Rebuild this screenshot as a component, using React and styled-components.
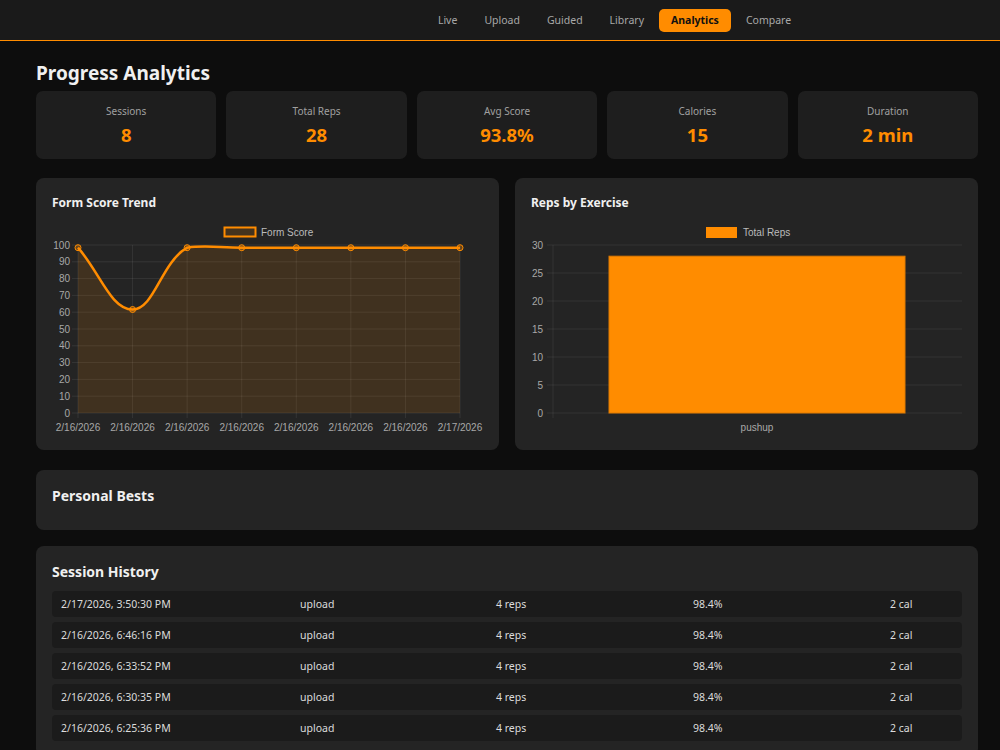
import React from 'react';
import styled, { createGlobalStyle } from 'styled-components';

const GlobalStyle = createGlobalStyle`
    html, body {
        margin: 0;
        padding: 0;
        background: #0d0d0d;
        color: #e8e8e8;
        font-family: "Noto Sans", "Open Sans", sans-serif;
    }
    * { box-sizing: border-box; }
`;

const ORANGE = '#ff8c00';
const CHART_FONT = '"Liberation Sans", Arial, sans-serif';

// Header
const Header = styled.header`
    height: 41px;
    background: #1a1a1a;
    border-bottom: 1px solid ${ORANGE};
    display: flex;
    align-items: center;
    justify-content: center;
    padding-left: 229px;
`;

const Nav = styled.nav`
    display: flex;
    gap: 3px;
`;

const NavItem = styled.button`
    border: none;
    border-radius: 5px;
    padding: 5px 12px;
    font-family: inherit;
    font-size: 10.5px;
    line-height: 13px;
    cursor: pointer;
    background: ${p => (p.$active ? ORANGE : 'transparent')};
    color: ${p => (p.$active ? '#111' : '#a8a8a8')};
    font-weight: ${p => (p.$active ? 700 : 400)};
`;

// Page
const Main = styled.main`
    width: 942px;
    margin-left: 36px;
    padding: 20px 0 40px;
`;

const Title = styled.h1`
    margin: 0 0 6px;
    font-size: 19px;
    line-height: 24px;
    font-weight: 700;
    color: #f0f0f0;
`;

const StatsRow = styled.div`
    display: grid;
    grid-template-columns: repeat(5, 1fr);
    gap: 10px;
    margin-bottom: 19px;
`;

const StatCard = styled.div`
    background: #1e1e1e;
    border-radius: 7px;
    height: 68px;
    display: flex;
    flex-direction: column;
    align-items: center;
    padding-top: 13px;
`;

const StatLabel = styled.div`
    font-size: 10px;
    line-height: 14px;
    color: #a0a0a0;
`;

const StatValue = styled.div`
    font-size: 18.5px;
    line-height: 24px;
    font-weight: 700;
    color: ${ORANGE};
    margin-top: 5px;
`;

const ChartsRow = styled.div`
    display: grid;
    grid-template-columns: 1fr 1fr;
    gap: 16px;
    margin-bottom: 20px;
`;

const Card = styled.section`
    background: #242424;
    border-radius: 8px;
    padding: 16px 16px ${p => p.$bottom || 16}px;
    margin-bottom: ${p => p.$gap || 0}px;
`;

const CardTitle = styled.h3`
    margin: 0;
    font-size: 12px;
    line-height: 18px;
    font-weight: 700;
    color: #f0f0f0;
`;

const SectionTitle = styled.h2`
    margin: 0 0 ${p => p.$mb || 8}px;
    font-size: 14px;
    line-height: 20px;
    font-weight: 700;
    color: #f0f0f0;
`;

const ChartSvg = styled.svg`
    display: block;
    margin-top: 11px;
    overflow: visible;
`;

const Rows = styled.div`
    display: flex;
    flex-direction: column;
    gap: 5px;
`;

const Row = styled.div`
    display: grid;
    grid-template-columns: 239px 196px 197px 197px 1fr;
    align-items: center;
    height: 26px;
    padding: 0 9px;
    background: #1b1b1b;
    border-radius: 4px;
    font-size: 10.5px;
    color: #dcdcdc;
`;

// Charts
const scores = [98.4, 61.6, 98.4, 98.4, 98.4, 98.4, 98.4, 98.4];
const dates = ['2/16/2026', '2/16/2026', '2/16/2026', '2/16/2026', '2/16/2026', '2/16/2026', '2/16/2026', '2/17/2026'];

const LX0 = 26, LX1 = 408, TOP = 22, BOT = 190;

// chart.js-like spline, control points kept inside the plot area
function splinePath(pts, t = 0.4) {
    const clampY = y => Math.min(BOT, Math.max(TOP, y));
    const cps = pts.map((p, i) => {
        const p0 = pts[i - 1] || p;
        const p2 = pts[i + 1] || p;
        const d01 = Math.hypot(p[0] - p0[0], p[1] - p0[1]);
        const d12 = Math.hypot(p2[0] - p[0], p2[1] - p[1]);
        const sum = d01 + d12 || 1;
        const fa = t * d01 / sum;
        const fb = t * d12 / sum;
        return {
            prev: [p[0] - fa * (p2[0] - p0[0]), clampY(p[1] - fa * (p2[1] - p0[1]))],
            next: [p[0] + fb * (p2[0] - p0[0]), clampY(p[1] + fb * (p2[1] - p0[1]))],
        };
    });
    let d = `M${pts[0][0]},${pts[0][1]}`;
    for (let i = 1; i < pts.length; i++) {
        const a = cps[i - 1].next;
        const b = cps[i].prev;
        d += ` C${a[0]},${a[1]} ${b[0]},${b[1]} ${pts[i][0]},${pts[i][1]}`;
    }
    return d;
}

const LineChart = () => {
    const step = (LX1 - LX0) / (scores.length - 1);
    const pts = scores.map((s, i) => [LX0 + i * step, BOT - (s / 100) * (BOT - TOP)]);
    const line = splinePath(pts);
    const area = `${line} L${LX1},${BOT} L${LX0},${BOT} Z`;
    const ticks = [0, 10, 20, 30, 40, 50, 60, 70, 80, 90, 100];
    return (
        <ChartSvg width="431" height="215" fontFamily={CHART_FONT} fontSize="10">
            <rect x="172.5" y="4.5" width="31" height="9" fill="rgba(255,140,0,0.15)" stroke={ORANGE} strokeWidth="2" />
            <text x="209" y="12.5" fill="#bbb">Form Score</text>
            {ticks.map(v => {
                const y = BOT - (v / 100) * (BOT - TOP);
                return (
                    <g key={v}>
                        <line x1={LX0 - 6} x2={LX1} y1={y} y2={y} stroke="rgba(255,255,255,0.08)" />
                        <text x="18" y={y + 3.5} textAnchor="end" fill="#a8a8a8">{v}</text>
                    </g>
                );
            })}
            {pts.map((p, i) => (
                <line key={i} x1={p[0]} x2={p[0]} y1={TOP} y2={BOT + 5} stroke="rgba(255,255,255,0.08)" />
            ))}
            <path d={area} fill="rgba(255,140,0,0.13)" />
            <path d={line} fill="none" stroke={ORANGE} strokeWidth="2.5" />
            {pts.map((p, i) => (
                <circle key={i} cx={p[0]} cy={p[1]} r="3" fill="rgba(255,140,0,0.3)" stroke={ORANGE} strokeWidth="1" />
            ))}
            {pts.map((p, i) => (
                <text key={i} x={p[0]} y="208" textAnchor="middle" fill="#a8a8a8">{dates[i]}</text>
            ))}
        </ChartSvg>
    );
};

const BX0 = 22, BX1 = 431;

const BarChart = () => {
    const ticks = [0, 5, 10, 15, 20, 25, 30];
    const yOf = v => BOT - (v / 30) * (BOT - TOP);
    return (
        <ChartSvg width="431" height="215" fontFamily={CHART_FONT} fontSize="10">
            <rect x="175" y="4" width="31" height="11" fill={ORANGE} />
            <text x="212" y="12.5" fill="#bbb">Total Reps</text>
            {ticks.map(v => (
                <g key={v}>
                    <line x1={BX0 - 6} x2={BX1} y1={yOf(v)} y2={yOf(v)} stroke="rgba(255,255,255,0.07)" />
                    <text x="12" y={yOf(v) + 3.5} textAnchor="end" fill="#a8a8a8">{v}</text>
                </g>
            ))}
            <line x1={BX0} x2={BX0} y1={TOP} y2={BOT + 5} stroke="rgba(255,255,255,0.07)" />
            <rect x="78" y={yOf(28)} width="296" height={BOT - yOf(28)} fill={ORANGE} stroke="#e07b00" strokeWidth="1" />
            <text x="226" y="208" textAnchor="middle" fill="#a8a8a8">pushup</text>
        </ChartSvg>
    );
};

const tabs = ['Live', 'Upload', 'Guided', 'Library', 'Analytics', 'Compare'];

const stats = [
    { label: 'Sessions', value: '8' },
    { label: 'Total Reps', value: '28' },
    { label: 'Avg Score', value: '93.8%' },
    { label: 'Calories', value: '15' },
    { label: 'Duration', value: '2 min' },
];

const sessions = [
    '2/17/2026, 3:50:30 PM',
    '2/16/2026, 6:46:16 PM',
    '2/16/2026, 6:33:52 PM',
    '2/16/2026, 6:30:35 PM',
    '2/16/2026, 6:25:36 PM',
];

const App = () => {
    return (
        <>
            <GlobalStyle />
            <Header>
                <Nav>
                    {tabs.map(t => (
                        <NavItem key={t} $active={t === 'Analytics'}>{t}</NavItem>
                    ))}
                </Nav>
            </Header>
            <Main>
                <Title>Progress Analytics</Title>
                <StatsRow>
                    {stats.map(s => (
                        <StatCard key={s.label}>
                            <StatLabel>{s.label}</StatLabel>
                            <StatValue>{s.value}</StatValue>
                        </StatCard>
                    ))}
                </StatsRow>
                <ChartsRow>
                    <Card $bottom={12}>
                        <CardTitle>Form Score Trend</CardTitle>
                        <LineChart />
                    </Card>
                    <Card $bottom={12}>
                        <CardTitle>Reps by Exercise</CardTitle>
                        <BarChart />
                    </Card>
                </ChartsRow>
                <Card $gap={16}>
                    <SectionTitle $mb={8}>Personal Bests</SectionTitle>
                </Card>
                <Card>
                    <SectionTitle $mb={9}>Session History</SectionTitle>
                    <Rows>
                        {sessions.map(d => (
                            <Row key={d}>
                                <span>{d}</span>
                                <span>upload</span>
                                <span>4 reps</span>
                                <span>98.4%</span>
                                <span>2 cal</span>
                            </Row>
                        ))}
                    </Rows>
                </Card>
            </Main>
        </>
    );
};

export default App;
